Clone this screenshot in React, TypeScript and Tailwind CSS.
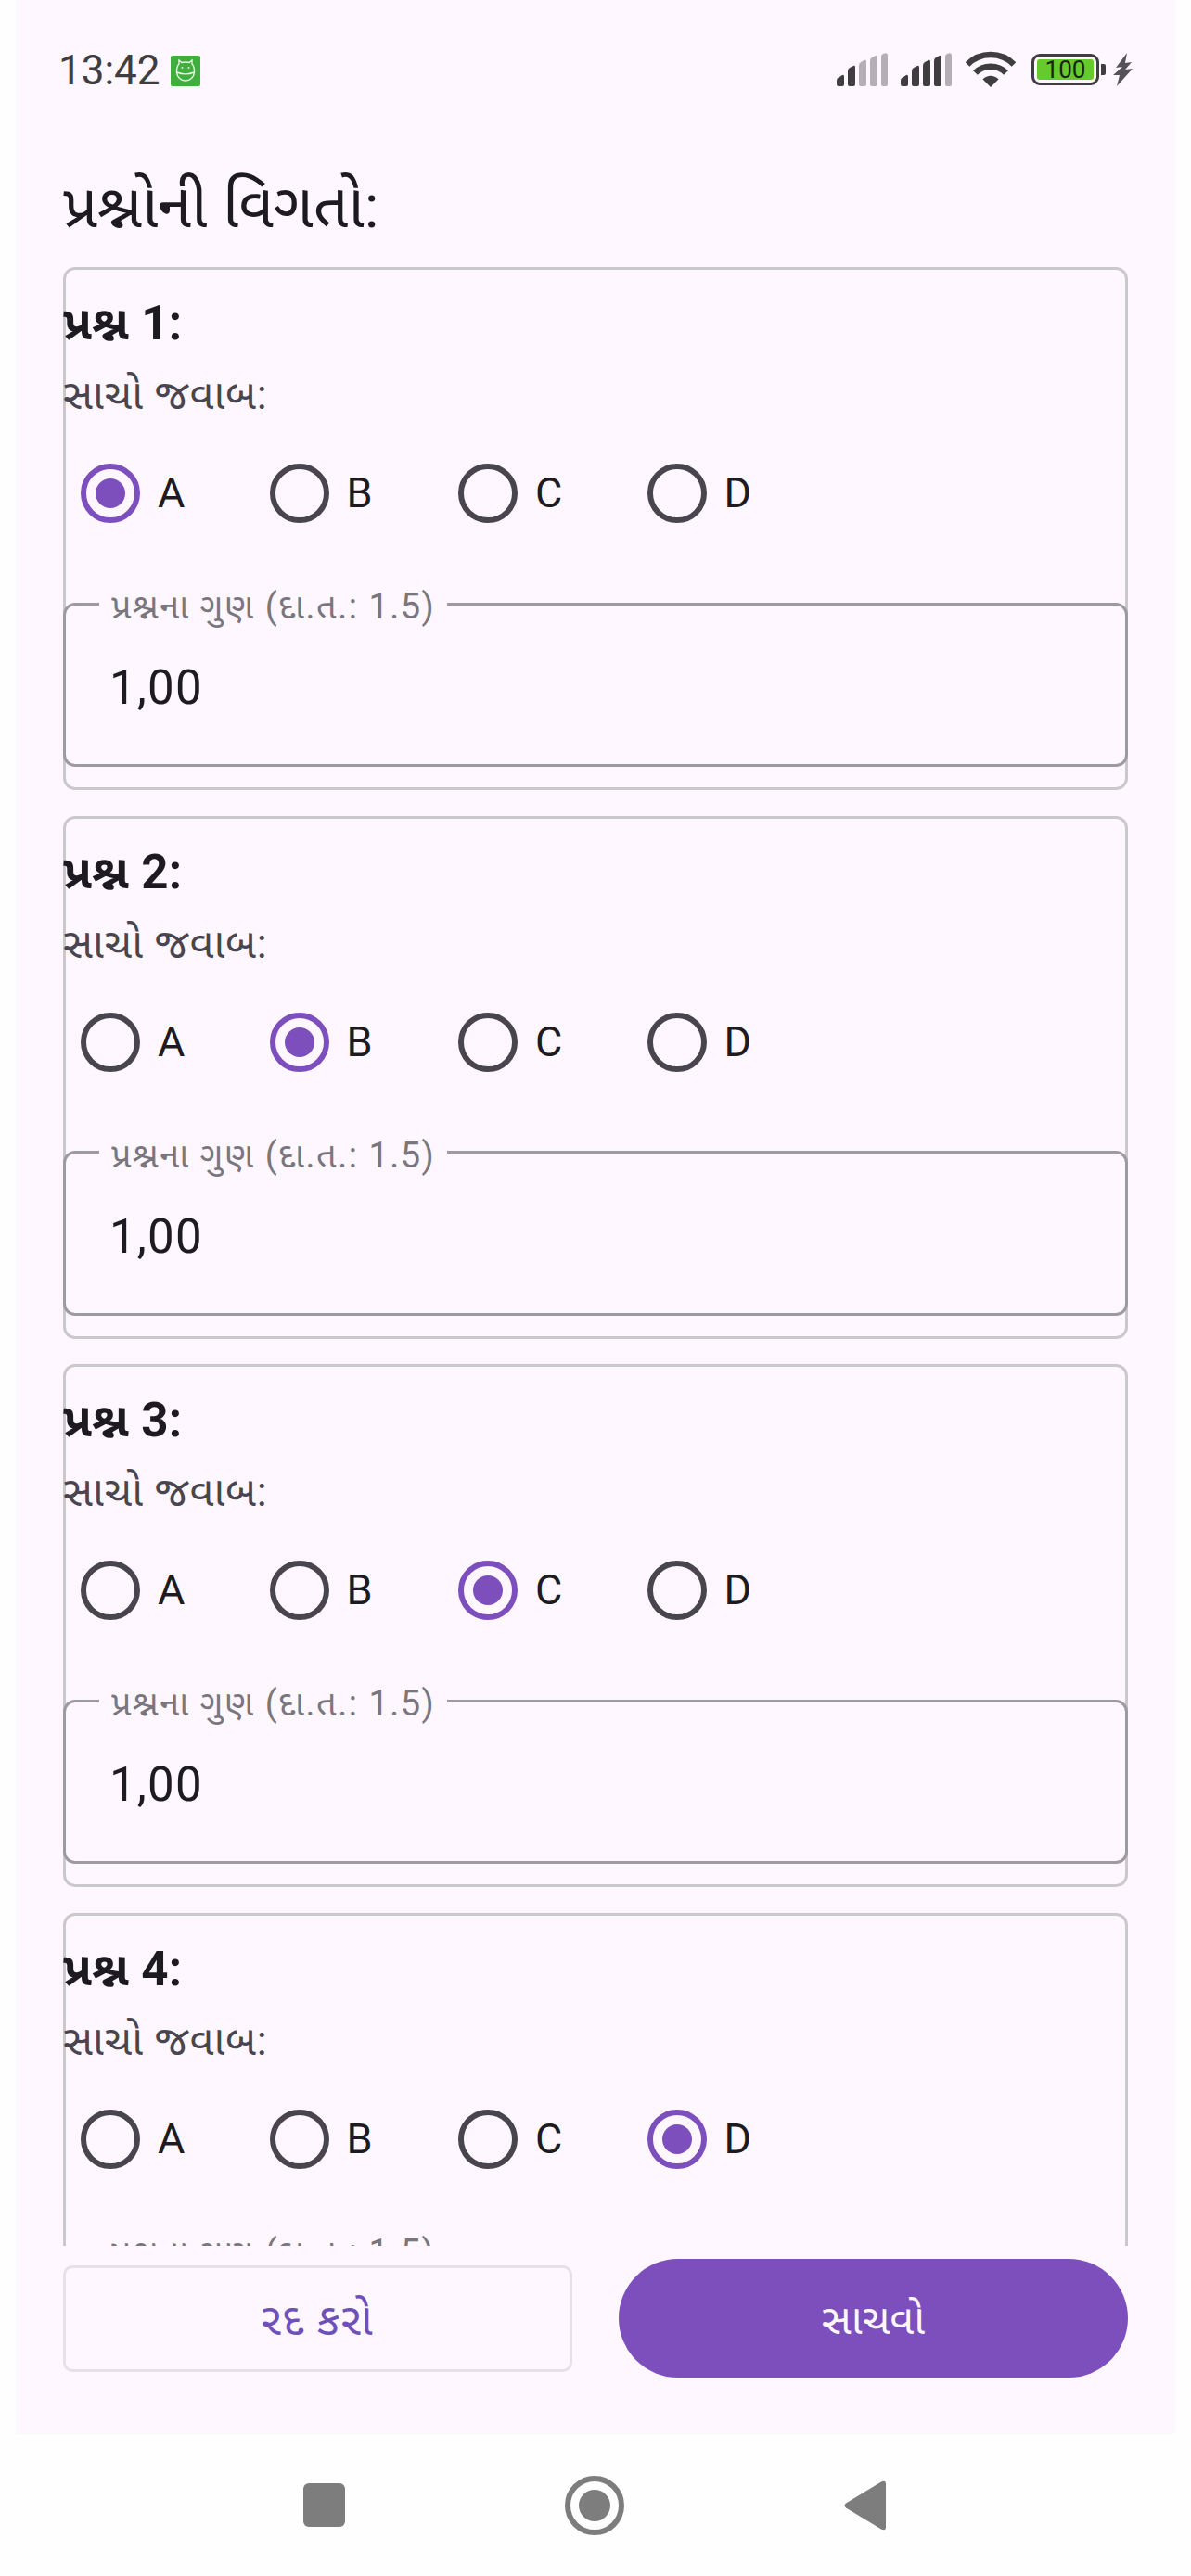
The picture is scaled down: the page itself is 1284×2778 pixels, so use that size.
const FONT = "font-['Roboto','Noto_Sans','Noto_Sans_Gujarati',sans-serif]";

function Signal({ level }: { level: number }) {
  return (
    <svg width="55" height="36" viewBox="0 0 55 36">
      <path d="M0 34V30Q0 27 3 26L6 24Q8 23 8 26V34Q8 36 6 36H2Q0 36 0 34Z" fill="#3f3d40" />
      <path d="M12 34V20Q12 17 14 16L18 14Q20 13 20 16V34Q20 36 18 36H14Q12 36 12 34Z" fill="#3f3d40" />
      <path d="M24 34V14Q24 11 26 10L30 8Q32 7 32 10V34Q32 36 30 36H26Q24 36 24 34Z" fill={level >= 3 ? "#3f3d40" : "#b3afb5"} />
      <path d="M36 34V9Q36 6 38 5L42 3Q44 2 44 5V34Q44 36 42 36H38Q36 36 36 34Z" fill={level >= 4 ? "#3f3d40" : "#b3afb5"} />
      <path d="M48 34V4Q48 2 50 1L52 0.4Q55 -0.5 55 3V34Q55 36 53 36H50Q48 36 48 34Z" fill="#b3afb5" />
    </svg>
  );
}

function Wifi() {
  return (
    <svg width="54" height="39" viewBox="0 0 54 39" fill="none" stroke="#3f3d40" strokeWidth="6.5">
      <path d="M2 14.5C15.5 0.5 38.5 0.5 52 14.5" />
      <path d="M10.5 23.5C19 14.5 35 14.5 43.5 23.5" />
      <path d="M27 39L18.5 30.5C23.5 25.5 30.5 25.5 35.5 30.5Z" fill="#3f3d40" stroke="none" />
    </svg>
  );
}

function Battery() {
  return (
    <div className="flex items-center gap-[2px]">
      <div className="flex h-[34px] w-[73px] items-center justify-center rounded-[9px] border-[3px] border-[#3f3d40] p-[3px]">
        <div className="flex h-full w-full items-center justify-center rounded-[3px] bg-[#66c92c] text-[26px] leading-none text-[#17240f]">
          100
        </div>
      </div>
      <div className="h-[12px] w-[5px] rounded-r-[2px] bg-[#3f3d40]" />
    </div>
  );
}

function Bolt() {
  return (
    <svg width="21" height="36" viewBox="0 0 21 36">
      <path d="M15 0L3 16L10 15L0 24L7 24L4 36L21 17L13 18L20 10L13 11Z" fill="#555357" />
    </svg>
  );
}

function AndroidBadge() {
  return (
    <div className="flex h-[33px] w-[32px] items-center justify-center rounded-[2px] bg-[#3fae3c]">
      <svg width="22" height="26" viewBox="0 0 22 26" fill="none" stroke="#e6f5e4" strokeWidth="1.4">
        <path d="M4 6L4 2L7 4.5C9 4 13 4 15 4.5L18 2L18 6C20 8 20.5 11 20.5 14C20.5 20 16 24 11 24C6 24 1.5 20 1.5 14C1.5 11 2 8 4 6Z" />
        <path d="M2 15C7 17.5 15 17.5 20 15" />
        <circle cx="7.5" cy="10" r="1" fill="#e6f5e4" stroke="none" />
        <circle cx="14.5" cy="10" r="1" fill="#e6f5e4" stroke="none" />
      </svg>
    </div>
  );
}

function Radio({ label, checked }: { label: string; checked: boolean }) {
  return (
    <div className="flex w-[203.5px] items-center gap-[19px]">
      <div
        className={
          checked
            ? "flex h-[64px] w-[64px] items-center justify-center rounded-full border-[6px] border-[#7c4fbc]"
            : "flex h-[64px] w-[64px] items-center justify-center rounded-full border-[6px] border-[#49454f]"
        }
      >
        {checked ? <div className="h-[32px] w-[32px] rounded-full bg-[#7c4fbc]" /> : null}
      </div>
      <span className="text-[45px] leading-[60px] text-[#1d1b20]">{label}</span>
    </div>
  );
}

function QuestionCard({ n, answer }: { n: number; answer: string }) {
  return (
    <div className="h-[564px] shrink-0 rounded-[13px] border-[3px] border-[#cbc8cc]">
      <div className="-mx-[3px]">
        <div className="pt-[28px] text-[51px] font-bold leading-[60px] tracking-[0.3px] text-[#1d1b20]">પ્રશ્ન {n}:</div>
        <div className="mt-[17px] text-[45px] leading-[60px] tracking-[0.7px] text-[#49454f]">સાચો જવાબ:</div>
        <div className="mt-[44px] flex pl-[19px]">
          {["A", "B", "C", "D"].map((l) => (
            <Radio key={l} label={l} checked={l === answer} />
          ))}
        </div>
        <fieldset className="mt-[61px] h-[202px] rounded-[13px] border-[3px] border-[#9e9aa1] pl-[47px]">
          <legend className="-ml-[11px] px-[13px] pt-[6px] text-[38px] leading-[46px] tracking-[1.5px] text-[#79767d]">
            પ્રશ્નના ગુણ (દા.ત.: 1.5)
          </legend>
          <div className="mt-[35px] text-[51px] leading-[60px] tracking-[1.2px] text-[#1d1b20]">1,00</div>
        </fieldset>
      </div>
    </div>
  );
}

export default function App() {
  return (
    <div className={`flex h-[2778px] w-[1284px] flex-col overflow-hidden bg-[#fffeff] ${FONT}`}>
      <div className="mx-[17px] flex h-[2625px] shrink-0 flex-col bg-[#fef7ff]">
        <div className="flex h-[183px] shrink-0 items-start justify-between pl-[46px] pr-[46px] pt-[55px]">
          <div className="flex items-center gap-[11px]">
            <span className="text-[44px] leading-[42px] text-[#3f3d40]">13:42</span>
            <AndroidBadge />
          </div>
          <div className="flex items-center">
            <Signal level={2} />
            <div className="ml-[14px]"><Signal level={4} /></div>
            <div className="ml-[15px]"><Wifi /></div>
            <div className="ml-[17px]"><Battery /></div>
            <div className="ml-[8px]"><Bolt /></div>
          </div>
        </div>
        <div className="shrink-0 px-[51px] text-[65.5px] leading-[80px] text-[#1d1b20]">પ્રશ્નોની વિગતો:</div>
        <div className="mt-[25px] flex min-h-0 flex-1 flex-col gap-[27.6px] overflow-hidden px-[51px]">
          <QuestionCard n={1} answer="A" />
          <QuestionCard n={2} answer="B" />
          <QuestionCard n={3} answer="C" />
          <QuestionCard n={4} answer="D" />
        </div>
        <div className="flex h-[203px] shrink-0 justify-between px-[51px] pt-[14px]">
          <button className="mt-[7px] h-[115px] w-[549px] rounded-[10px] border-[3px] border-[#e6e0e9] pt-[3px] text-[48px] tracking-[1.4px] text-[#6f4fb8]">
            રદ કરો
          </button>
          <button className="h-[128px] w-[549px] rounded-full bg-[#7c4fbc] pt-[4px] text-[45px] text-[#fef7ff]">
            સાચવો
          </button>
        </div>
      </div>
      <div className="flex flex-1 items-center justify-center pr-[3px]">
        <div className="flex w-[291px] justify-center">
          <div className="h-[47px] w-[45px] rounded-[6px] bg-[#7d7d7d]" />
        </div>
        <div className="flex w-[291px] justify-center">
          <div className="flex h-[64px] w-[64px] items-center justify-center rounded-full border-[6px] border-[#7d7d7d]">
            <div className="h-[34px] w-[34px] rounded-full bg-[#7d7d7d]" />
          </div>
        </div>
        <div className="flex w-[291px] justify-center">
          <svg width="46" height="56" viewBox="0 0 46 56">
            <path d="M41 2.5L3 25.5Q0 28 3 30.5L41 53.5Q46 56 46 51V5Q46 0 41 2.5Z" fill="#7d7d7d" />
          </svg>
        </div>
      </div>
    </div>
  );
}
